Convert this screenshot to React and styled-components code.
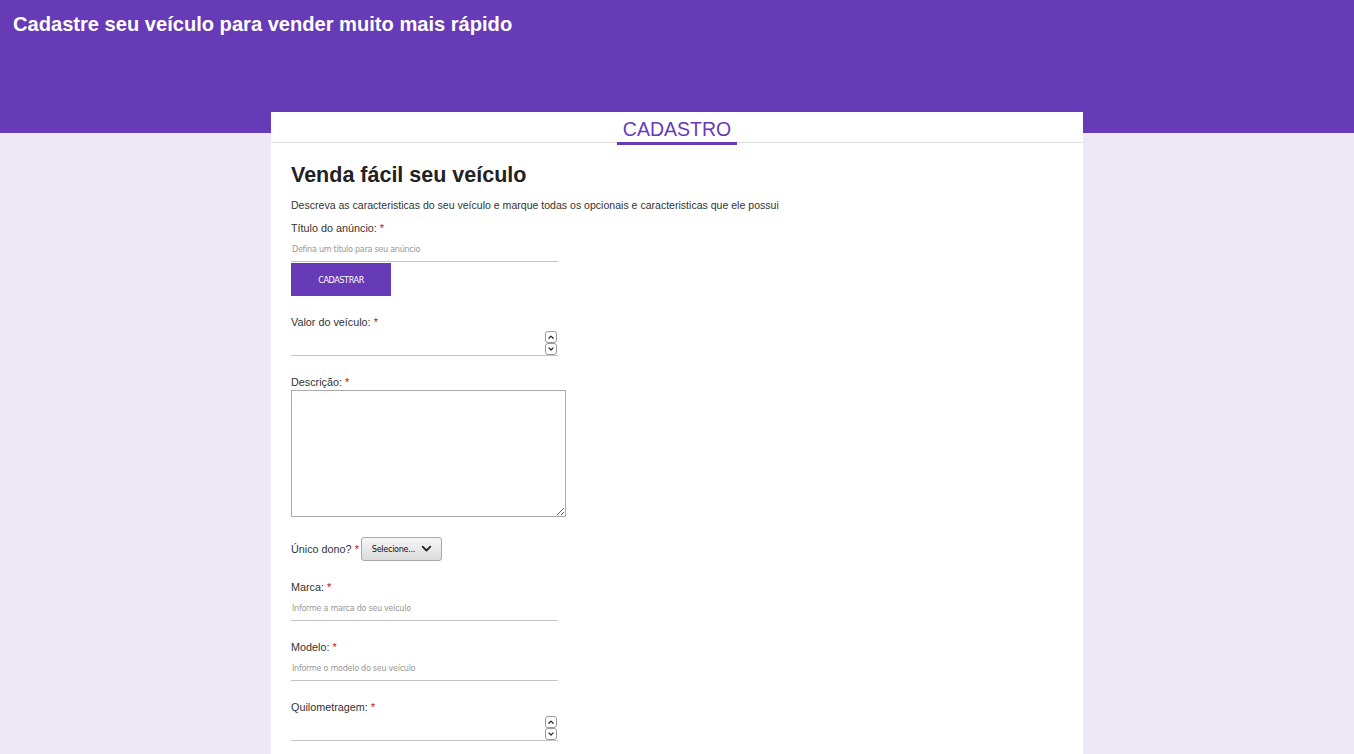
import React from 'react'
import styled, { createGlobalStyle } from 'styled-components'

const GlobalStyle = createGlobalStyle`
  body {
    margin: 0;
    background: #ede7f6;
    font-family: "Liberation Sans", Arial, sans-serif;
    color: #333;
  }
`

const narrow = `"Liberation Sans Narrow", "DejaVu Sans Condensed", "Liberation Sans", sans-serif`

const TopBar = styled.header`
  height: 133px;
  background: #673ab7;
  padding: 12px 13px 0;
  box-sizing: border-box;
`

const TopTitle = styled.h1`
  margin: 0;
  font-size: 20.1px;
  line-height: 24px;
  font-weight: bold;
  color: #fff;
`

const Card = styled.main`
  width: 812px;
  margin: -21px auto 0;
  background: #fff;
  min-height: 700px;
`

const Tabs = styled.nav`
  display: flex;
  justify-content: center;
  height: 30px;
  border-bottom: 1px solid #ddd;
`

const Tab = styled.div`
  width: 120px;
  box-sizing: border-box;
  text-align: center;
  font-size: 19.5px;
  line-height: 24px;
  padding-top: 5px;
  color: #673ab7;
  border-bottom: 3px solid ${(props) => (props.active ? '#673ab7' : 'transparent')};
  height: 33px;
`

const Body = styled.section`
  padding: 19px 20px 40px;
`

const Heading = styled.h2`
  margin: 0;
  font-size: 21.5px;
  line-height: 26px;
  font-weight: bold;
  color: #222;
`

const Intro = styled.p`
  margin: 10px 0 0;
  font-size: 10.55px;
  line-height: 14px;
  color: #333;
`

const Field = styled.div`
  margin-top: ${(props) => props.top || 19}px;
`

const Label = styled.label`
  display: block;
  font-size: 10.8px;
  line-height: 14px;
  color: #333;
  white-space: nowrap;
`

const Req = styled.span`
  color: #d00;
`

const InputWrap = styled.div`
  position: relative;
  width: 267px;
`

const LineInput = styled.input`
  display: block;
  width: 267px;
  height: 27px;
  box-sizing: border-box;
  border: none;
  border-bottom: 1px solid #c4c4c4;
  padding: 2px 1px 0;
  outline: none;
  font-family: ${narrow};
  font-size: 9px;
  letter-spacing: -0.3px;
  color: #333;
  background: transparent;
  &::placeholder {
    color: #999;
  }
  &::-webkit-inner-spin-button,
  &::-webkit-outer-spin-button {
    -webkit-appearance: none;
    margin: 0;
  }
  -moz-appearance: textfield;
`

const Spinner = styled.div`
  position: absolute;
  right: 1px;
  bottom: 1px;
  display: flex;
  flex-direction: column;
`

const SpinBtn = styled.div`
  width: 12px;
  height: 12px;
  box-sizing: border-box;
  border: 1px solid #9a9a9a;
  border-radius: 3px;
  background: #fff;
  display: flex;
  align-items: center;
  justify-content: center;
`

const SubmitButton = styled.button`
  display: block;
  margin-top: 1px;
  width: 100px;
  height: 33px;
  border: none;
  background: #673ab7;
  color: #fff;
  font-family: ${narrow};
  font-size: 9px;
  letter-spacing: -0.4px;
  padding: 0;
  cursor: pointer;
`

const TextArea = styled.textarea`
  display: block;
  margin-top: 1px;
  width: 275px;
  height: 127px;
  box-sizing: border-box;
  border: 1px solid #aaa;
  padding: 2px;
  outline: none;
  font-family: "Liberation Sans", sans-serif;
  font-size: 11px;
`

const InlineRow = styled.div`
  display: flex;
  align-items: center;
  gap: 2px;
  margin-top: 20px;
`

const SelectBox = styled.div`
  width: 81px;
  height: 24px;
  box-sizing: border-box;
  border: 1px solid #a9a9a9;
  border-radius: 3px;
  background: linear-gradient(#f6f6f6, #dcdcdc);
  display: flex;
  align-items: center;
  padding: 0 0 0 10px;
  gap: 6px;
  font-family: ${narrow};
  font-size: 9px;
  letter-spacing: -0.3px;
  color: #111;
  white-space: nowrap;
  svg {
    flex-shrink: 0;
  }
`

const Chevron = ({ up, size = 6, stroke = 1.4 }) => (
  <svg width={size} height={size * 0.7} viewBox="0 0 10 7">
    <path
      d={up ? 'M1.5 5.5 L5 2 L8.5 5.5' : 'M1.5 1.5 L5 5 L8.5 1.5'}
      fill="none"
      stroke="#222"
      strokeWidth={stroke * 10 / size}
      strokeLinecap="round"
      strokeLinejoin="round"
    />
  </svg>
)

const NumberSpinner = () => (
  <Spinner>
    <SpinBtn><Chevron up size={6} stroke={1.2} /></SpinBtn>
    <SpinBtn><Chevron size={6} stroke={1.2} /></SpinBtn>
  </Spinner>
)

const RequiredLabel = ({ children }) => (
  <Label>{children} <Req>*</Req></Label>
)

const TextField = ({ label, placeholder, top }) => (
  <Field top={top}>
    <RequiredLabel>{label}</RequiredLabel>
    <LineInput placeholder={placeholder} />
  </Field>
)

const NumberField = ({ label }) => (
  <Field>
    <RequiredLabel>{label}</RequiredLabel>
    <InputWrap>
      <LineInput type="number" />
      <NumberSpinner />
    </InputWrap>
  </Field>
)

const App = () => {
  return (
    <>
      <GlobalStyle />
      <TopBar>
        <TopTitle>Cadastre seu veículo para vender muito mais rápido</TopTitle>
      </TopBar>
      <Card>
        <Tabs>
          <Tab active>CADASTRO</Tab>
        </Tabs>
        <Body>
          <Heading>Venda fácil seu veículo</Heading>
          <Intro>Descreva as caracteristicas do seu veículo e marque todas os opcionais e caracteristicas que ele possui</Intro>
          <TextField top={9} label="Título do anúncio:" placeholder="Defina um titulo para seu anúncio" />
          <SubmitButton>CADASTRAR</SubmitButton>
          <NumberField label="Valor do veículo:" />
          <Field>
            <RequiredLabel>Descrição:</RequiredLabel>
            <TextArea />
          </Field>
          <InlineRow>
            <RequiredLabel>Único dono?</RequiredLabel>
            <SelectBox>
              <span>Selecione...</span>
              <Chevron size={11} stroke={1.8} />
            </SelectBox>
          </InlineRow>
          <TextField label="Marca:" placeholder="Informe a marca do seu veículo" />
          <TextField label="Modelo:" placeholder="Informe o modelo do seu veículo" />
          <NumberField label="Quilometragem:" />
        </Body>
      </Card>
    </>
  )
}

export default App
